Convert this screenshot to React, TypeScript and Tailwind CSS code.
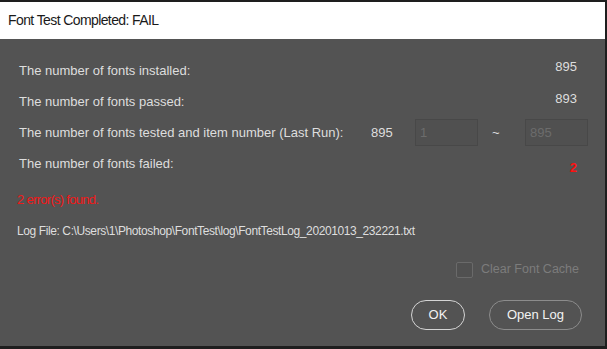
import React from 'react';

// Photoshop "Font Test" result dialog
const rows = [
  { label: 'The number of fonts installed:', value: '895', nudge: 'mb-[8px]' },
  { label: 'The number of fonts passed:', value: '893', nudge: 'mb-[6px]' },
];

const App: React.FC = () => {
  return (
    <div className="w-[607px] h-[349px] bg-[#1e1e1e] pt-[2px] pr-[2px] pb-[3px] flex flex-col font-['Liberation_Sans',Arial,sans-serif]">
      {/* title bar */}
      <div className="h-[37px] bg-white flex items-center pl-[8px] shrink-0">
        <span className="text-[14px] tracking-[-0.6px] text-[#1a1a1a]">
          Font Test Completed: FAIL
        </span>
      </div>

      {/* body */}
      <div className="flex-1 bg-[#535353] pt-[16px] pr-[28px] text-[13px] text-[#dedede] flex flex-col">
        {rows.map((r) => (
          <div key={r.label} className="h-[31px] pl-[19px] flex items-center">
            <span>{r.label}</span>
            <span className={`ml-auto ${r.nudge}`}>{r.value}</span>
          </div>
        ))}

        <div className="h-[31px] pl-[19px] mr-[-28px] flex items-center">
          <span className="w-[352px] shrink-0">The number of fonts tested and item number (Last Run):</span>
          <span className="w-[44px] shrink-0">895</span>
          <div className="w-[63px] h-[27px] shrink-0 border border-[#484848] bg-[#505050] flex items-center pl-[4px] text-[#6c6c6c]">1</div>
          <span className="w-[47px] shrink-0 pl-[14px]">~</span>
          <div className="w-[63px] h-[27px] shrink-0 border border-[#484848] bg-[#505050] flex items-center pl-[4px] text-[#6c6c6c]">895</div>
        </div>

        <div className="h-[31px] pl-[19px] flex items-center">
          <span>The number of fonts failed:</span>
          <span className="ml-auto mt-[9px] text-[#ff1010] font-bold">2</span>
        </div>

        <div className="h-[31px] pl-[17px] mt-[5px] flex items-center">
          <span className="text-[13px] tracking-[-0.7px] text-[#f01818]">2 error(s) found.</span>
        </div>

        <div className="h-[31px] pl-[17px] flex items-center">
          <span className="text-[12px] tracking-[-0.4px]">Log File: C:\Users\1\Photoshop\FontTest\log\FontTestLog_20201013_232221.txt</span>
        </div>

        {/* options */}
        <div className="h-[31px] mt-[8px] flex items-center justify-end">
          <label className="flex items-center gap-[8px] mr-[-2px]">
            <span className="w-[17px] h-[16px] border border-[#6a6a6a] rounded-[2px] bg-[#505050]" />
            <span className="text-[#7c7c7c] text-[12.5px]">Clear Font Cache</span>
          </label>
        </div>

        <div className="mt-[15px] flex justify-end gap-[24px] mr-[-5px]">
          <button className="w-[54px] h-[30px] rounded-full border-[1.5px] border-[#d4d4d4] text-[#f2f2f2] text-[13px]">
            OK
          </button>
          <button className="w-[93px] h-[30px] rounded-full border border-[#8c8c8c] text-[#f2f2f2] text-[13px]">
            Open Log
          </button>
        </div>
      </div>
    </div>
  );
};

export default App;
